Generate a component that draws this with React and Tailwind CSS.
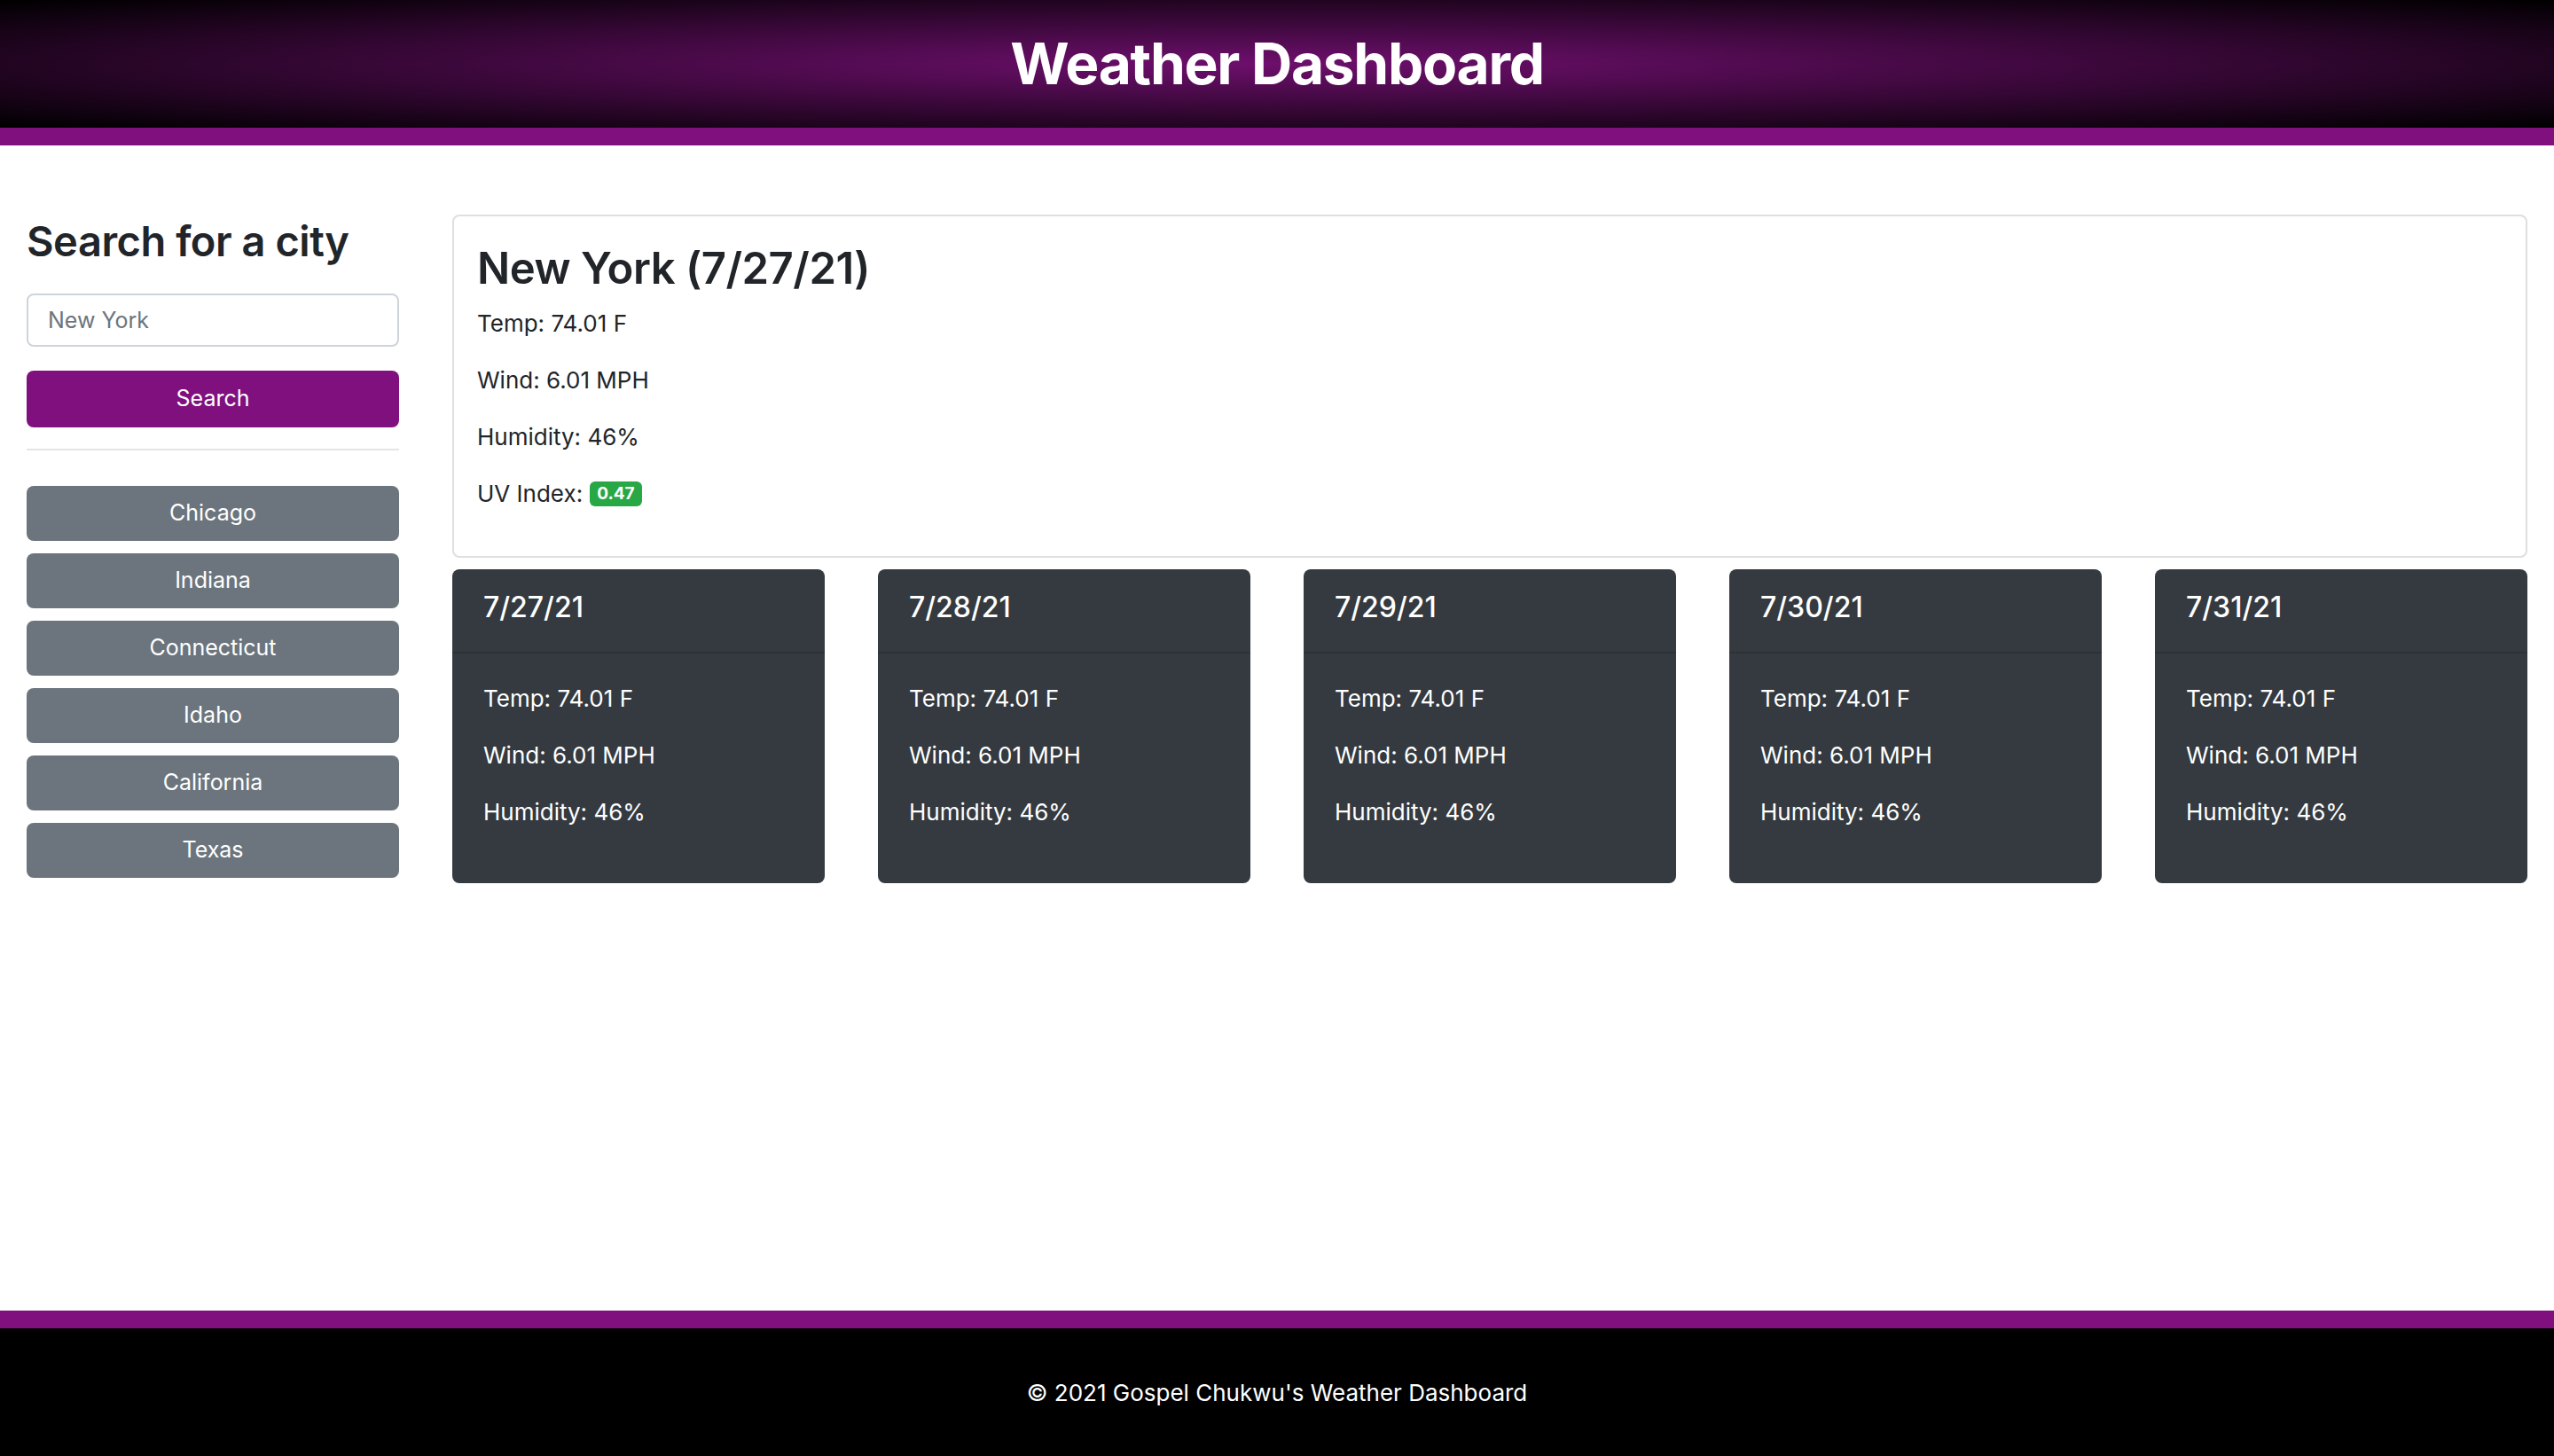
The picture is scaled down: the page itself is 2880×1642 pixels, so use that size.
import React, { useState } from "react";

const cities = ["Chicago", "Indiana", "Connecticut", "Idaho", "California", "Texas"];
const forecast = ["7/27/21", "7/28/21", "7/29/21", "7/30/21", "7/31/21"];

const ForecastCard = ({ date }) => (
  <div className="bg-[#343a40] text-white rounded-[8px] overflow-hidden">
    <div className="px-[35px] pt-[24px] pb-[31px] border-b-2 border-[#2d3237]">
      <h5 className="text-[32px] leading-[1.2] font-medium">{date}</h5>
    </div>
    <div className="px-[35px] pt-[31px] pb-[61px] text-[26px] leading-[39px]">
      <p className="mb-[25px]">Temp: 74.01 F</p>
      <p className="mb-[25px]">Wind: 6.01 MPH</p>
      <p>Humidity: 46%</p>
    </div>
  </div>
);

export default function App() {
  const [city, setCity] = useState("");

  return (
    <div className="min-h-screen flex flex-col bg-white text-[#212529] font-['Inter','Liberation_Sans',sans-serif]">
      {/* Header */}
      <header className="h-[144px] flex items-center justify-center bg-[radial-gradient(ellipse_at_center,#6e0f6d_0%,#000_100%)]">
        <h1 className="text-white text-[64px] font-bold tracking-[-0.02em] leading-none">Weather Dashboard</h1>
      </header>
      <div className="h-[20px] bg-[#7f107e]" />

      {/* Main */}
      <main className="flex-1 px-[30px] pt-[78px] pb-[40px] grid grid-cols-[420px_1fr] gap-[60px] items-start">
        {/* Sidebar */}
        <aside className="flex flex-col">
          <h3 className="text-[47px] leading-[60px] font-semibold tracking-[-0.01em] mb-[29px]">Search for a city</h3>
          <input
            value={city}
            onChange={(e) => setCity(e.target.value)}
            placeholder="New York"
            className="h-[60px] border-2 border-[#ced4da] rounded-[8px] px-[22px] text-[25px] placeholder:text-[#6c757d] outline-none"
          />
          <button className="mt-[27px] h-[64px] rounded-[8px] bg-[#7f107e] text-white text-[25px]">Search</button>
          <hr className="mt-[24px] mb-[40px] border-t-2 border-[#e5e5e5]" />
          <div className="flex flex-col gap-[14px]">
            {cities.map((c) => (
              <button key={c} className="h-[62px] rounded-[8px] bg-[#6c757d] text-white text-[25px]">
                {c}
              </button>
            ))}
          </div>
        </aside>

        {/* Weather */}
        <section className="flex flex-col gap-[13px]">
          <div className="border-2 border-[#dfdfdf] rounded-[8px] px-[26px] pt-[29px] pb-[26px]">
            <h3 className="text-[49px] leading-[60px] font-semibold tracking-[-0.01em] mb-[12px]">New York (7/27/21)</h3>
            <div className="text-[26px] leading-[39px]">
              <p className="mb-[25px]">Temp: 74.01 F</p>
              <p className="mb-[25px]">Wind: 6.01 MPH</p>
              <p className="mb-[25px]">Humidity: 46%</p>
              <p className="mb-[25px] flex items-center gap-[8px]">
                UV Index:
                <span className="inline-flex items-center h-[28px] px-[8px] rounded-[6px] bg-[#28a745] text-white text-[19px] font-bold">0.47</span>
              </p>
            </div>
          </div>
          <div className="grid grid-cols-5 gap-[60px]">
            {forecast.map((d) => (
              <ForecastCard key={d} date={d} />
            ))}
          </div>
        </section>
      </main>

      {/* Footer */}
      <footer>
        <div className="h-[20px] bg-[#7f107e]" />
        <div className="h-[144px] bg-black flex items-center justify-center">
          <p className="text-white text-[26px]">© 2021 Gospel Chukwu's Weather Dashboard</p>
        </div>
      </footer>
    </div>
  );
}
